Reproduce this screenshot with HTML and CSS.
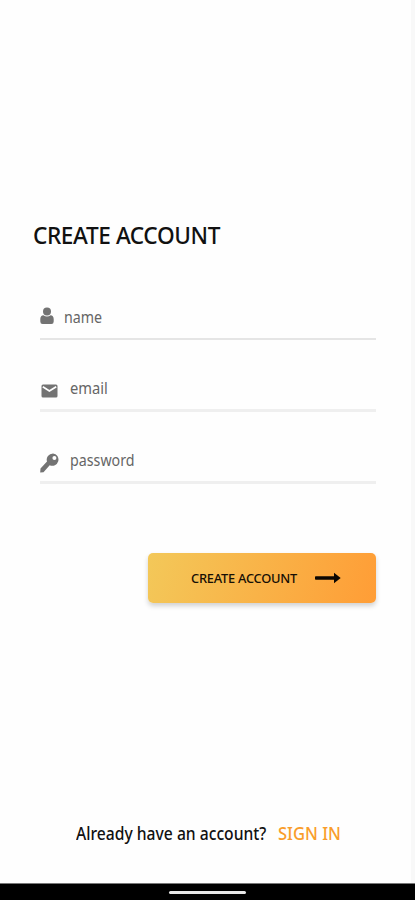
FILE: index.html
```html
<!DOCTYPE html>
<html lang="en">
<head>
    <meta charset="UTF-8" />
    <meta name="viewport" content="width=device-width, initial-scale=1.0" />
    <title>Create account</title>
    <link rel="stylesheet" href="styles.css">
</head>
<body>
    <main>
        <h1>CREATE ACCOUNT</h1>

        <form class="form">
            <label class="field field-name">
                <svg width="14" height="18" viewBox="0 0 14 18">
                    <circle cx="7" cy="4.5" r="4" />
                    <path d="M0.3 14.5V12C0.3 9.6 1.6 8.3 3.4 8.2Q7 10.8 10.6 8.2C12.4 8.3 13.7 9.6 13.7 12V14.5Q13.7 17 11.4 17H2.6Q0.3 17 0.3 14.5Z" />
                </svg>
                <span>name</span>
            </label>
            <label class="field field-email">
                <svg width="18" height="18" viewBox="0 0 18 18">
                    <rect x="1.5" y="3.5" width="16" height="13" rx="1.5" />
                    <path class="flap" d="M2.8 5.8L9.4 10L16.2 5.8" />
                </svg>
                <span>email</span>
            </label>
            <label class="field field-password">
                <svg width="20" height="20" viewBox="0 0 20 20">
                    <path fill-rule="evenodd" d="M13 0.4A6.3 6.3 0 0 0 7 8.6L0.5 15.6L0.2 19.5L3.5 19.2L9.7 12.2A6.2 6.2 0 1 0 13 0.4ZM14.4 3.1A2 2 0 1 1 14.4 7.1A2 2 0 0 1 14.4 3.1Z" />
                </svg>
                <span>password</span>
            </label>

            <button type="button" class="submit">
                <span>CREATE ACCOUNT</span>
                <svg width="26" height="12" viewBox="0 0 26 12">
                    <path d="M0.8 4.3H19V0.8L25.7 6L19 11.2V7.7H0.8Q0 7.7 0 6.9V5.1Q0 4.3 0.8 4.3Z" />
                </svg>
            </button>
        </form>

        <p class="signin">
            <span class="question">Already have an account?</span>
            <a>SIGN IN</a>
        </p>
    </main>

    <div class="navbar">
        <div class="handle"></div>
    </div>
</body>
</html>
```

FILE: styles.css
```css
body {
    margin: 0;
    height: 900px;
    display: flex;
    flex-direction: column;
    overflow: hidden;
    background-color: #fefefe;
    font-family: "Noto Sans", sans-serif;
    color: #111;
}

main {
    flex: 1;
    display: flex;
    flex-direction: column;
    box-sizing: border-box;
    border-right: 4px solid #f8f8f8;
}

/* narrow lettering */
h1,
.field span,
.submit span,
.signin span,
.signin a {
    transform-origin: left center;
}

h1 {
    margin: 219px 0 0 33px;
    font-size: 23px;
    line-height: 32px;
    font-weight: 500;
    letter-spacing: -0.4px;
    white-space: nowrap;
    transform: scaleX(0.983);
}

.form {
    display: flex;
    flex-direction: column;
    margin: 41px 35px 0 40px;
}

.field {
    display: flex;
    box-sizing: border-box;
    height: 72px;
    padding-top: 30px;
    border-bottom: 3px solid #efefef;
    font-size: 16px;
    line-height: 22px;
    color: #666;
}

.field span {
    transform: scaleX(0.89);
}

.field svg {
    fill: #737373;
}

.field-name {
    height: 48px;
    padding-top: 14px;
    border-bottom: 2px solid #e5e5e5;
}

.field-name svg {
    margin: 1px 10px 0 0;
}

.field-email svg {
    margin: 11px 12px 0 0;
}

.field-email span,
.field-password span {
    margin-top: 7px;
}

.field-email span {
    transform: scaleX(0.92);
}

.field-password svg {
    margin: 11px 10px 0 0;
}

.flap {
    fill: none;
    stroke: #fefefe;
    stroke-width: 1.8;
}

.submit {
    display: flex;
    align-items: center;
    align-self: flex-end;
    width: 228px;
    height: 50px;
    margin-top: 69px;
    padding: 0 0 0 43px;
    border: none;
    border-radius: 5px;
    background: linear-gradient(105deg, #f3c859, #ff9d36);
    box-shadow: 0 3px 5px rgba(0, 0, 0, 0.18);
    font-family: inherit;
    font-size: 13.2px;
    font-weight: 500;
    letter-spacing: -0.25px;
    color: #160f05;
}

.submit span {
    width: 107px;
    margin-right: 17px;
    text-align: left;
    white-space: nowrap;
    transform: scaleX(0.975);
}

.submit svg {
    fill: #0c0702;
}

.signin {
    display: flex;
    margin: auto 0 37px 76px;
    font-size: 18px;
    line-height: 26px;
    font-weight: 500;
    white-space: nowrap;
}

.question {
    width: 202px;
    transform: scaleX(0.87);
}

.signin a {
    color: #f99d2b;
    transform: scaleX(0.92);
}

.navbar {
    display: flex;
    justify-content: center;
    box-sizing: border-box;
    height: 17px;
    padding-top: 7px;
    border-top: 1px solid #777;
    background-color: #000;
}

.handle {
    width: 77px;
    height: 3px;
    border-radius: 2px;
    background-color: #e8e8e8;
}
```
